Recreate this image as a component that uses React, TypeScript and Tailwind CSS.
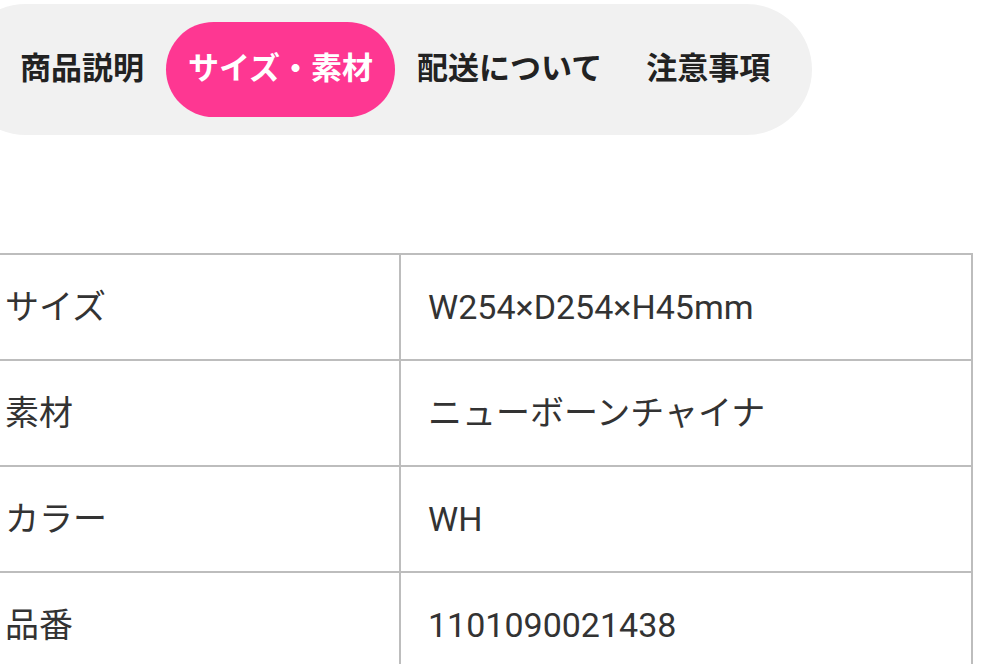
const tabs = ['商品説明', 'サイズ・素材', '配送について', '注意事項'];

const rows: [string, string][] = [
  ['サイズ', 'W254×D254×H45mm'],
  ['素材', 'ニューボーンチャイナ'],
  ['カラー', 'WH'],
  ['品番', '1101090021438'],
];

export default function App() {
  return (
    <div
      className="w-[1003px] h-[664px] overflow-hidden bg-white pt-1"
      style={{ fontFamily: 'Roboto, "Noto Sans CJK JP", sans-serif' }}
    >
      <div className="ml-[-40px] inline-flex items-center rounded-full bg-[#f1f1f1] pl-[38px] pr-5 py-[18px]">
        {tabs.map((t, i) => (
          <div
            key={t}
            className={
              i === 1
                ? 'h-[95px] flex items-center px-[22px] rounded-full bg-[#fe3792] text-white font-bold text-[31px]'
                : 'h-[95px] flex items-center px-[22px] text-[#222] font-bold text-[31px]'
            }
          >
            {t}
          </div>
        ))}
      </div>

      <table className="mt-[118px] ml-[-24px] w-[997px] border-collapse text-[34px] text-[#333]">
        <tbody>
          {rows.map(([k, v]) => (
            <tr key={k} className="h-[106px]">
              <td className="w-[423px] border-2 border-[#bdbdbd] pl-[27px] align-middle">{k}</td>
              <td className="border-2 border-[#bdbdbd] pl-[27px] align-middle">{v}</td>
            </tr>
          ))}
        </tbody>
      </table>
    </div>
  );
}
